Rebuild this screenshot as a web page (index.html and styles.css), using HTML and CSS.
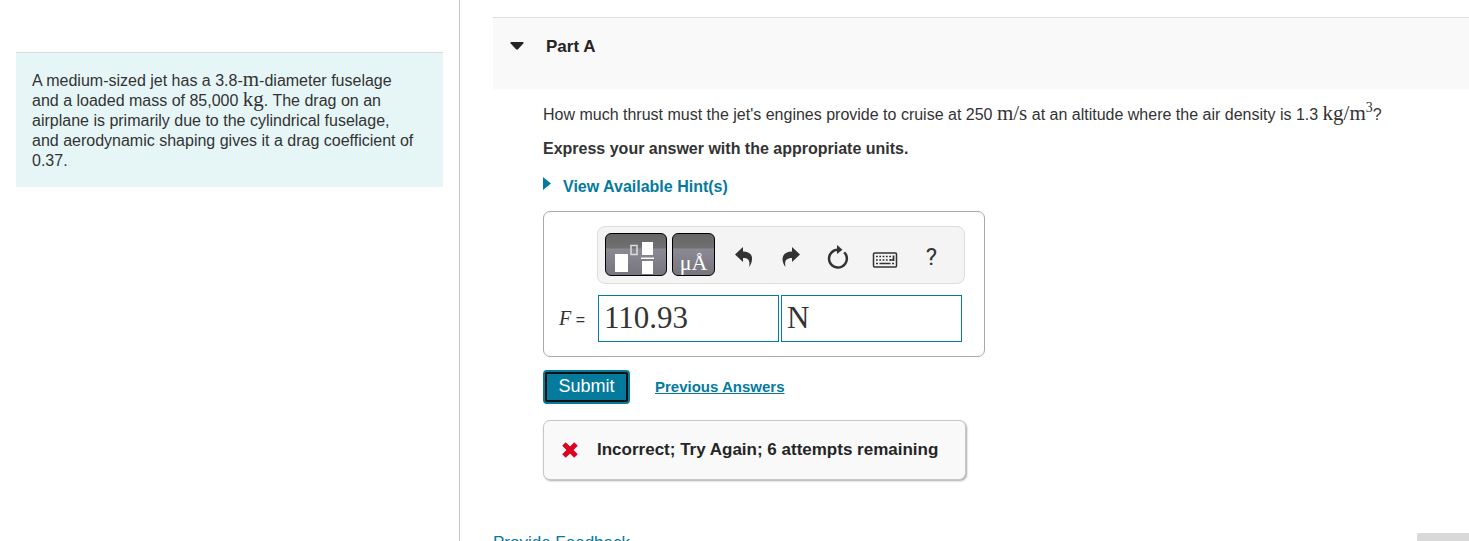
FILE: index.html
```html
<!DOCTYPE html>
<html lang="en">
<head>
  <meta charset="UTF-8" />
  <meta name="viewport" content="width=device-width, initial-scale=1" />
  <title>Part A</title>
  <link rel="stylesheet" href="styles.css">
</head>
<body>
  <div class="layout">
    <!-- Problem statement -->
    <aside class="sidebar">
      <div class="intro">
        <p>A medium-sized jet has a 3.8-<span class="unit">m</span>-diameter fuselage and a loaded mass of 85,000 <span class="unit">kg</span>. The drag on an airplane is primarily due to the cylindrical fuselage, and aerodynamic shaping gives it a drag coefficient of 0.37.</p>
      </div>
    </aside>

    <main class="content">
      <section class="part">
        <header class="part-header">
          <button type="button" class="part-toggle" aria-label="Collapse part" aria-expanded="true">
            <svg width="14" height="8" viewBox="0 0 14 8"><path d="M1 0h12q1 .6.3 1.400L8 7.300q-1 .9-2 0L.7 1.400Q0 .6 1 0z" /></svg>
          </button>
          <h2>Part A</h2>
        </header>

        <form class="part-body">
          <p class="question">How much thrust must the jet's engines provide to cruise at 250 <span class="unit">m/s</span> at an altitude where the air density is 1.3 <span class="unit">kg/m<sup>3</sup></span>?</p>
          <p class="instructions">Express your answer with the appropriate units.</p>
          <a href="#" class="hints">
            <svg width="8" height="14" viewBox="0 0 8 14"><path d="M0 0l8 6.500-8 6.500z" /></svg>
            View Available Hint(s)
          </a>

          <div class="answer-box">
            <div class="toolbar">
              <button type="button" class="dark-btn templates-btn" aria-label="Templates">
                <svg width="40" height="34" viewBox="0 0 40 34">
                  <path d="M1 12h13v18H1zM28 0h11v13H28zM28 19h11v13H28zM27 15.500h13V17H27z" fill="#fff" />
                  <path d="M17 3.500h6v9h-6z" fill="none" stroke="#ddd" stroke-width="1.500" />
                </svg>
              </button>
              <button type="button" class="dark-btn symbols-btn" aria-label="Symbols">μÅ</button>
              <button type="button" class="tool-btn" aria-label="Undo">
                <svg width="18" height="20" viewBox="0 0 18 20"><path d="M0 7.500L8 0v4.500c6 0 9.500 3 9 8-.2 3-1.500 5.500-3 7.500 1.200-5.500.3-9-6-9V15z" /></svg>
              </button>
              <button type="button" class="tool-btn" aria-label="Redo">
                <svg width="18" height="20" viewBox="0 0 18 20"><path d="M18 7.500L10 0v4.500C4 4.500.5 7.500.5 12.500.7 15.500 2 18 3.500 20 2.300 14.500 3.700 11 10 11v4z" /></svg>
              </button>
              <button type="button" class="tool-btn" aria-label="Reset">
                <svg width="22" height="24" viewBox="0 0 22 24"><path d="M12 4.800A8.900 8.900 0 1 0 17.200 7.300" fill="none" stroke="#333" stroke-width="2.500" /><path d="M10 0l5.500 4.700L10 9z" /></svg>
              </button>
              <button type="button" class="tool-btn" aria-label="Keyboard shortcuts">
                <svg width="26" height="22" viewBox="0 -6 26 22">
                  <rect x="1.500" y="1" width="23" height="14" rx="1" fill="none" stroke="#333" stroke-width="1.500" />
                  <path d="M4 4.500h15M4 8h15" stroke="#333" stroke-width="1.700" stroke-dasharray="1.800 1.500" />
                  <path d="M21.500 3.500V9M18 8h4M4 11.500h2M7.500 11.500h11M20 11.500h2" fill="none" stroke="#333" stroke-width="1.700" />
                </svg>
              </button>
              <button type="button" class="tool-btn help-btn" aria-label="Help">?</button>
            </div>

            <div class="answer-row">
              <label for="value"><i>F</i> =</label>
              <input type="text" id="value" value="110.93" />
              <input type="text" id="units" value="N" aria-label="Units" />
            </div>
          </div>

          <div class="actions">
            <button type="submit" class="submit-btn">Submit</button>
            <a href="#" class="previous">Previous Answers</a>
          </div>

          <div class="feedback">
            <svg width="18" height="18" viewBox="0 0 18 18"><path d="M3 3l12 12M15 3L3 15" fill="none" stroke="#dc0020" stroke-width="5" /></svg>
            <p>Incorrect; Try Again; 6 attempts remaining</p>
          </div>
        </form>
      </section>

      <footer class="content-footer">
        <a href="#">Provide Feedback</a>
        <button type="button" class="next-btn" aria-label="Next"></button>
      </footer>
    </main>
  </div>
</body>
</html>
```
FILE: styles.css
```css
* {
  box-sizing: border-box;
  margin: 0;
  padding: 0;
}

body {
  font-family: "Liberation Sans", Arial, sans-serif;
  font-size: 16px;
  line-height: 20px;
  color: #333;
  background: #fff;
}

button,
input {
  font-family: inherit;
  border: none;
}

button {
  cursor: pointer;
}

a {
  color: #047a9c;
}

svg {
  display: block;
  flex: none;
  fill: #252525;
}

.layout {
  display: flex;
  height: 100vh;
  overflow: hidden;
}

.sidebar {
  flex: none;
  width: 460px;
  padding: 52px 16px 0;
  border-right: 1px solid #c0c7d3;
}

.intro {
  padding: 18px 25px 16px 16px;
  border-top: 1px solid #d6dcdc;
  background: #e6f6f7;
}

.unit {
  font-family: "Liberation Serif", "Times New Roman", serif;
  font-size: 21px;
  line-height: 16px;
}

.unit sup {
  font-size: 14px;
  line-height: 0;
}

.content {
  flex: 1;
  min-width: 0;
  padding: 17px 0 0 33px;
}

.part-header {
  display: flex;
  align-items: flex-start;
  gap: 22px;
  height: 72px;
  padding: 19px 17px 0;
  border-top: 1px solid #ddd;
  background: #f9f9f9;
}

.part-header h2 {
  font-size: 17px;
  line-height: 20px;
  color: #252525;
}

.part-toggle {
  padding: 5px 0;
  background: none;
}

.part-body {
  padding: 16px 16px 0 50px;
}

.instructions {
  margin-top: 14px;
  font-weight: bold;
}

.hints {
  display: flex;
  gap: 12px;
  width: max-content;
  margin-top: 18px;
  font-weight: bold;
  text-decoration: none;
}

.hints svg {
  fill: #047a9c;
}

.answer-box {
  width: 442px;
  margin-top: 14px;
  padding: 14px 19px 14px 15px;
  border: 1px solid #a9a9a9;
  border-radius: 7px;
}

.toolbar {
  display: flex;
  align-items: flex-start;
  height: 58px;
  margin-left: 38px;
  padding: 6px 7px;
  border: 1px solid #ddd;
  border-radius: 8px;
  background: #f4f4f4;
}

.dark-btn {
  display: flex;
  justify-content: center;
  height: 43px;
  margin-right: 5px;
  border: 1px solid #000;
  border-radius: 6px;
  background: linear-gradient(#666 0, #707070 14px, #8b8a94 15px, #77767f 100%);
  color: #fff;
}

.templates-btn {
  width: 62px;
  padding: 8px 4px 0 0;
}

.symbols-btn {
  width: 43px;
  padding-top: 16px;
  font-family: "Liberation Serif", serif;
  font-size: 22px;
  line-height: 26px;
}

.tool-btn {
  display: flex;
  align-items: center;
  justify-content: center;
  width: 47px;
  height: 47px;
  background: none;
}

.tool-btn svg {
  fill: #333;
}

.help-btn {
  font-family: Roboto, sans-serif;
  font-size: 24px;
  line-height: 24px;
  color: #333;
}

.answer-row {
  display: flex;
  align-items: center;
  gap: 2px;
  margin-top: 11px;
}

.answer-row label {
  width: 37px;
}

.answer-row i {
  font-family: "Liberation Serif", serif;
  font-size: 20px;
}

.answer-row input {
  width: 181px;
  height: 47px;
  padding: 0 5px 2px;
  border: 1px solid #047a9c;
  font-family: "Liberation Serif", "Times New Roman", serif;
  font-size: 31px;
  color: #333;
}

.actions {
  display: flex;
  align-items: center;
  gap: 25px;
  margin-top: 13px;
}

.submit-btn {
  width: 87px;
  height: 34px;
  padding-bottom: 2px;
  border: 2px solid #047a9c;
  border-radius: 4px;
  outline: 2px solid #111;
  outline-offset: -4px;
  background: #047a9c;
  font-size: 18px;
  color: #fff;
}

.previous {
  font-size: 15px;
  font-weight: bold;
}

.feedback {
  display: flex;
  align-items: center;
  gap: 18px;
  width: 423px;
  height: 60px;
  margin-top: 16px;
  padding: 0 17px;
  border: 1px solid #c7c7c7;
  border-radius: 7px;
  background: #f9f9f9;
  box-shadow: 1px 1px 2px #aaa;
  font-size: 17px;
  font-weight: bold;
  color: #252525;
  white-space: nowrap;
}

.content-footer {
  display: flex;
  justify-content: space-between;
  margin-top: 53px;
}

.content-footer a {
  font-size: 17px;
  text-decoration: none;
}

.next-btn {
  width: 52px;
  height: 36px;
  border-radius: 2px 0 0 2px;
  background: #d9d9d9;
}
```
